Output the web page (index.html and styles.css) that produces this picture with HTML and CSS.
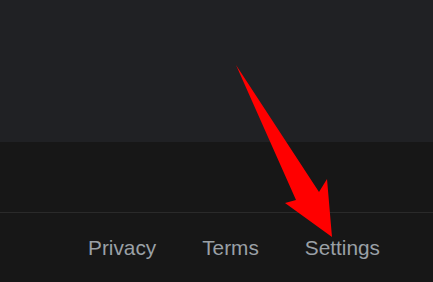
FILE: index.html
```html
<!DOCTYPE html>
<html lang="en">
<head>
    <meta charset="UTF-8">
    <meta name="viewport" content="width=device-width, initial-scale=1.0">
    <title>Footer</title>
    <link rel="stylesheet" href="styles.css">
</head>
<body>

<div class="page">
    <!-- Main content area -->
    <div class="content"></div>

    <!-- Country bar -->
    <div class="country-bar"></div>

    <!-- Footer links -->
    <div class="footer">
        <a href="#">Privacy</a>
        <a href="#">Terms</a>
        <a href="#">Settings</a>
    </div>

    <!-- Annotation arrow -->
    <svg class="arrow" width="433" height="282" viewBox="0 0 433 282">
        <polygon points="236,65 319,192 327,179 332,237 285,203 296,200" fill="#ff0000"/>
    </svg>
</div>

</body>
</html>
```

FILE: styles.css
```css
body {
    margin: 0;
    padding: 0;
    background-color: #171717;
    font-family: Arial, "Liberation Sans", sans-serif;
}

.page {
    position: relative;
    width: 433px;
    height: 282px;
    overflow: hidden;
}

.content {
    height: 142px;
    background-color: #202124;
}

.country-bar {
    height: 70px;
    background-color: #171717;
    border-bottom: 1px solid #2a2a2a;
}

.footer {
    display: flex;
    justify-content: flex-end;
    gap: 46px;
    padding: 23px 53px 0 0;
}

.footer a {
    color: #9aa0a6;
    font-size: 20.8px;
    text-decoration: none;
}

.arrow {
    position: absolute;
    top: 0;
    left: 0;
}
```
